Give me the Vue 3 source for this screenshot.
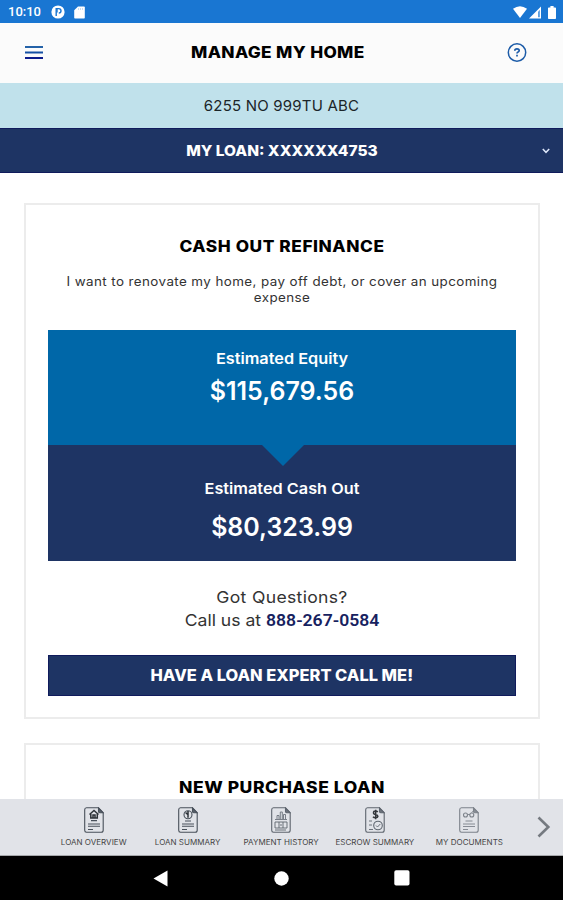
<template>
  <div class="screen">
    <header class="status-bar">
      <div class="status-left">
        <span class="clock">10:10</span>
        <svg width="14" height="14" viewBox="0 0 14 14">
          <circle cx="7" cy="7" r="6.6" fill="#fff" />
          <path d="M5.2 11V3.6h2.6a2.1 2.1 0 0 1 0 4.4" fill="none" stroke="#1976d2" stroke-width="1.4" />
          <path d="M5 3.5h2v4H5z" fill="#1976d2" opacity=".7" />
        </svg>
        <svg class="sd" width="11" height="13" viewBox="0 0 11 13">
          <path d="M4 .5h6q.8 0 .8.8v10.4q0 .8-.8.8H1q-.8 0-.8-.8V4.3z" fill="#fff" />
          <path d="M4.5 2v2M6.5 2v2M8.500 2v2" stroke="#1976d2" stroke-width=".6" opacity=".4" />
        </svg>
      </div>
      <div class="status-right">
        <svg width="14" height="12" viewBox="0 0 14 12"><path d="M0 2.800Q7-2.400 14 2.800L7 12z" fill="#fff" /></svg>
        <svg width="13" height="13" viewBox="0 0 13 13">
          <path d="M0 12.500 12 .5v12z" fill="#fff" />
          <path d="M9 5.800v5.400h1.900V3.800z" fill="#1976d2" opacity=".7" />
        </svg>
        <svg class="battery" width="8" height="13" viewBox="0 0 8 13"><path d="M2.400 0h3.200v1.400h1.600q.8 0 .8.8v10q0 .8-.8.8H.8Q0 13 0 12.200V2.200q0-.8.8-.8h1.600z" fill="#fff" /></svg>
      </div>
    </header>

    <div class="app-bar">
      <svg width="18" height="14" viewBox="0 0 18 14">
        <path d="M0 1h18" stroke="#2462a8" stroke-width="2" />
        <path d="M0 6.500h18" stroke="#1550a4" stroke-width="2" />
        <path d="M0 12h18" stroke="#0c1c8c" stroke-width="2" />
      </svg>
      <h1 class="heading title">MANAGE MY HOME</h1>
      <svg width="20" height="20" viewBox="0 0 20 20" fill="none" stroke="#1d5ca8">
        <circle cx="10" cy="9.500" r="8.700" stroke-width="1.500" />
        <path d="M7.800 7.800q0-2 2.200-2t2.200 1.800q0 1-1.100 1.500-1.100.5-1.100 1.400" stroke-width="1.700" />
        <path d="M10 11.800v1.600" stroke-width="1.700" />
      </svg>
    </div>

    <div class="address">6255 NO 999TU ABC</div>

    <div class="loan">
      <span class="heading loan-text">MY LOAN: XXXXXX4753</span>
      <svg class="chevron" width="8" height="6" viewBox="0 0 8 6"><path d="M.8 1 4 4.300 7.200 1" fill="none" stroke="#dfe8fa" stroke-width="1.500" /></svg>
    </div>

    <main class="content">
      <section class="card">
        <h2 class="heading refinance">CASH OUT REFINANCE</h2>
        <p class="desc">I want to renovate my home, pay off debt, or cover an upcoming<br>expense</p>
        <div class="equity">
          <div class="est-label">{{ estimates[0].label }}</div>
          <div class="amount">{{ estimates[0].amount }}</div>
        </div>
        <div class="cash-out">
          <div class="est-label">{{ estimates[1].label }}</div>
          <div class="amount out-amount">{{ estimates[1].amount }}</div>
        </div>
        <p class="questions">
          <span class="got">Got Questions?</span><br>
          Call us at <a class="phone">888-267-0584</a>
        </p>
        <button class="heading call-btn"><span>HAVE A LOAN EXPERT CALL ME!</span></button>
      </section>
      <section class="card">
        <h2 class="heading purchase">NEW PURCHASE LOAN</h2>
      </section>
    </main>

    <nav class="tabs">
      <div v-for="tab in tabs" :key="tab.icon" class="tab">
        <svg :class="tab.icon" width="20" height="26" viewBox="0 0 20 26" fill="none" stroke="#48505a" stroke-width="1.100">
          <path d="M2.500.8h12l4.700 4.900v17.500q0 2-2 2H2.500q-1.800 0-1.800-2V2.800q0-2 1.800-2z" />
          <path d="M14.500 1v3.500q0 1.200 1.200 1.200H19z" fill="#59616a" />
          <template v-if="tab.icon === 'overview'">
            <path d="m5.500 7.500 4.500-4 4.500 4M6.800 7v4h6.500V7M9 11V8h2v3" stroke="#2c3238" stroke-width="1.500" />
            <path d="M7 13.600h6M4 17h12M4 19.200h12M4 22.500h5" />
          </template>
          <template v-else-if="tab.icon === 'summary'">
            <circle cx="10" cy="7.700" r="4" />
            <path d="M10 7.700V4M10 7.700 7.500 5.500M10 7.700v3" stroke="#2c3238" stroke-width="1.500" />
            <path d="M7 14h6M4 17h12M4 19.200h12M4 22.500h5" />
          </template>
          <template v-else-if="tab.icon === 'history'">
            <path d="M6 12V8.500h2V12M9.300 12V5h2v7M12.500 12V7.500h2V12M4 12.500h12" stroke-width=".8" />
            <path d="M4 15h12v6H4zM8 15v6M12 15v6M9 18h2M4 23h11" stroke-width=".9" />
          </template>
          <template v-else-if="tab.icon === 'escrow'">
            <path d="M12.800 5Q11.900 4 10.500 4 8.500 4 8.500 5.700t2.200 1.700Q12.900 7.900 12.900 9.400 12.700 10.800 10.500 10.800 8.900 10.800 8 9.800M10.700 2.800v9.400" stroke="#15191d" stroke-width="1.500" />
            <circle cx="13" cy="18.500" r="4.300" />
            <path d="m11 18.500 1.500 1.500 2.800-3M4 14h3M4 18h3M4 22.500h4" stroke-width=".9" />
          </template>
          <template v-else>
            <circle cx="6.500" cy="8" r="2" /><circle cx="12.800" cy="8" r="2" />
            <path d="M8.500 7.500h2.500M12.500 5.500l2-1.500M6.500 14h7M4 17h12M4 19.500h12M4 22.500h5" stroke-width=".9" />
          </template>
        </svg>
        <span class="tab-label">{{ tab.label }}</span>
      </div>
      <svg class="next" width="14" height="22" viewBox="0 0 14 22"><path d="m1.500 1.500 9.800 9.500-9.800 9.500" fill="none" stroke="#757a80" stroke-width="2.600" /></svg>
    </nav>

    <footer class="system-bar">
      <svg width="15" height="17" viewBox="0 0 15 17"><path d="M.5 8.500 14.500.5v16z" fill="#fff" /></svg>
      <svg width="15" height="15" viewBox="0 0 15 15"><circle cx="7.500" cy="7.500" r="7.200" fill="#fff" /></svg>
      <svg width="16" height="16" viewBox="0 0 16 16"><rect x=".3" y=".3" width="15.200" height="15.200" rx="1.800" fill="#fff" /></svg>
    </footer>
  </div>
</template>

<script setup>
const estimates = [
  { label: "Estimated Equity", amount: "$115,679.56" },
  { label: "Estimated Cash Out", amount: "$80,323.99" },
];

const tabs = [
  { icon: "overview", label: "LOAN OVERVIEW" },
  { icon: "summary", label: "LOAN SUMMARY" },
  { icon: "history", label: "PAYMENT HISTORY" },
  { icon: "escrow", label: "ESCROW SUMMARY" },
  { icon: "documents", label: "MY DOCUMENTS" },
];
</script>

<style>
body { margin: 0; }
</style>

<style scoped>
.screen {
  height: 900px;
  display: flex;
  flex-direction: column;
  overflow: hidden;
  background: #fff;
  color: #000;
  font-family: Inter, "Liberation Sans", sans-serif;
  white-space: nowrap;
}
svg { display: block; flex-shrink: 0; }
h1, h2, p { margin: 0; }

.heading {
  font-size: 15.5px;
  line-height: 20px;
  font-weight: 800;
}

.status-bar {
  height: 23px;
  flex-shrink: 0;
  display: flex;
  align-items: center;
  justify-content: space-between;
  background: #1976d2;
  padding: 1px 7px 0 8px;
  box-sizing: border-box;
}
.status-left, .status-right { display: flex; align-items: center; }
.clock {
  width: 43px;
  color: #fff;
  font: 500 13px/20px Roboto, sans-serif;
}
.sd { margin-left: 9px; }
.status-right { gap: 2px; }
.battery { margin-left: 4px; }

.app-bar {
  height: 60px;
  flex-shrink: 0;
  display: flex;
  align-items: center;
  justify-content: space-between;
  padding: 0 36px 0 25px;
  box-sizing: border-box;
  background: #fbfbfb;
}
/* wide display caps */
.title { letter-spacing: 0.3px; transform: translateX(3px) scaleX(1.115); }

.address {
  height: 45px;
  flex-shrink: 0;
  background: #c0e1eb;
  color: #1b2529;
  font-size: 15px;
  line-height: 45px;
  text-align: center;
  letter-spacing: 0.2px;
}

.loan {
  height: 45px;
  flex-shrink: 0;
  display: flex;
  align-items: center;
  justify-content: center;
  position: relative;
  box-sizing: border-box;
  border-top: 1px solid #101b5c;
  border-bottom: 1px solid #101b5c;
  background: #1e3464;
  color: #fff;
}
.loan-text { font-size: 15px; transform: scaleX(1.03); }
.chevron { position: absolute; right: 13px; top: 19px; }

.content {
  flex: 1;
  min-height: 0;
  display: flex;
  flex-direction: column;
  gap: 24px;
  padding: 30px 23px 0 24px;
  overflow: hidden;
}
.card {
  height: 516px;
  flex-shrink: 0;
  box-sizing: border-box;
  border: 2px solid #ececec;
  padding: 32px 22px 0;
  text-align: center;
}
.refinance { letter-spacing: 0.5px; transform: scaleX(1.115); }
.purchase { padding-top: 1px; letter-spacing: 0.5px; transform: scaleX(1.13); }
.desc {
  margin-top: 17px;
  font-size: 12.8px;
  line-height: 16px;
  color: #333;
  letter-spacing: 0.4px;
  transform: scaleX(1.045);
}
.equity {
  height: 115px;
  margin-top: 24px;
  padding-top: 19px;
  box-sizing: border-box;
  background: #0067a8;
  color: #fff;
}
.cash-out {
  height: 116px;
  position: relative;
  padding-top: 34px;
  box-sizing: border-box;
  background: #1e3464;
  color: #fff;
}
.cash-out::before {
  content: "";
  position: absolute;
  left: 214px;
  top: 0;
  border: 21px solid transparent;
  border-top-color: #0067a8;
  border-bottom: 0;
}
.est-label { font-size: 15px; line-height: 20px; font-weight: 600; transform: scaleX(1.085); }
.amount { margin-top: 8px; font-size: 26px; line-height: 28px; font-weight: 600; transform: scaleX(0.96); }
.out-amount { margin-top: 14px; }
.questions {
  margin-top: 25px;
  font-size: 16.5px;
  line-height: 23px;
  color: #333;
  transform: scaleX(1.065);
}
.got { letter-spacing: 0.3px; }
.phone { color: #17225f; font-family: Roboto, sans-serif; font-weight: 600; }
.call-btn {
  width: 100%;
  height: 41px;
  margin-top: 23px;
  border: 1px solid #101b5c;
  background: #1e3464;
  color: #fff;
  font-family: inherit;
}
.call-btn span { display: inline-block; transform: scaleX(1.06); }

.tabs {
  height: 57px;
  flex-shrink: 0;
  display: flex;
  position: relative;
  box-sizing: border-box;
  padding-left: 47px;
  border-bottom: 1px solid #a5a7aa;
  background: #e1e3e8;
}
.tab {
  width: 93.8px;
  padding-top: 8px;
  display: flex;
  flex-direction: column;
  align-items: center;
}
.history, .escrow { opacity: 0.85; }
.documents { opacity: 0.65; }
.tab-label {
  margin-top: 5px;
  font-size: 7.5px;
  line-height: 10px;
  color: #444;
  transform: scaleX(1.07);
}
.next { position: absolute; left: 537px; top: 17px; }

.system-bar {
  height: 44px;
  flex-shrink: 0;
  display: flex;
  align-items: center;
  justify-content: center;
  gap: 105.5px;
  background: #000;
}
</style>
